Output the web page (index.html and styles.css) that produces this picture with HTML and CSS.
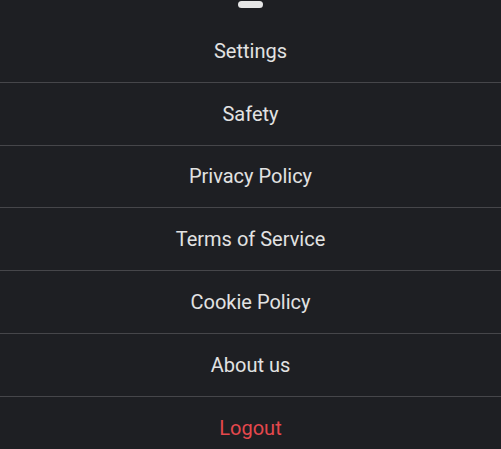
FILE: index.html
```html
<!DOCTYPE html>
<html>
<head lang="en">
    <meta charset="UTF-8">
    <title>Menu</title>
    <link rel="stylesheet" href="styles.css">
</head>
<body>
<div class="sheet">
    <div class="handle"></div>
    <ul class="menu">
        <li>Settings</li>
        <li>Safety</li>
        <li>Privacy Policy</li>
        <li>Terms of Service</li>
        <li>Cookie Policy</li>
        <li>About us</li>
        <li class="logout">Logout</li>
    </ul>
</div>
</body>
</html>
```

FILE: styles.css
```css
* {
    margin: 0;
    padding: 0;
}

ul {
    list-style: none;
}

html, body {
    height: 100%;
    overflow: hidden;
    background-color: #1e1f23;
}

body {
    font-family: Roboto, "Liberation Sans", sans-serif;
}

.sheet {
    display: flex;
    flex-direction: column;
    align-items: center;
}

.handle {
    width: 25px;
    height: 7px;
    margin-top: 1px;
    margin-bottom: 12px;
    border-radius: 4px;
    background-color: #e6e6e6;
}

.menu {
    width: 100%;
}

.menu li {
    padding: 18.9px 0;
    font-size: 20px;
    line-height: 24px;
    text-align: center;
    color: #e2e2e2;
    border-top: 1px solid #46464a;
    cursor: pointer;
}

.menu li:first-child {
    border-top: none;
}

.menu li.logout {
    color: #e5484d;
}
```
